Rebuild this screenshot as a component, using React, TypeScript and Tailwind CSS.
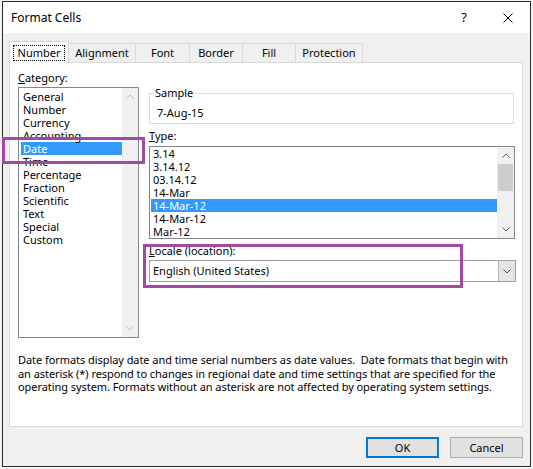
import React from 'react';

const categories = [
  'General',
  'Number',
  'Currency',
  'Accounting',
  'Date',
  'Time',
  'Percentage',
  'Fraction',
  'Scientific',
  'Text',
  'Special',
  'Custom',
];

const types = ['3.14', '3.14.12', '03.14.12', '14-Mar', '14-Mar-12', '14-Mar-12', 'Mar-12'];

const tabs = [
  { label: 'Alignment', width: 'w-[67px]' },
  { label: 'Font', width: 'w-[54px]' },
  { label: 'Border', width: 'w-[53px]' },
  { label: 'Fill', width: 'w-[53px]' },
  { label: 'Protection', width: 'w-[67px]' },
];

const Chevron = ({ dir, className = '' }: { dir: 'up' | 'down'; className?: string }) => (
  <svg width="8" height="5" viewBox="0 0 8 5" className={className}>
    <path
      d={dir === 'up' ? 'M0.5 4.5L4 1L7.5 4.5' : 'M0.5 0.5L4 4L7.5 0.5'}
      fill="none"
      stroke="currentColor"
      strokeWidth="1"
    />
  </svg>
);

export default function App() {
  return (
    <div className="relative w-[533px] h-[469px] bg-[#f3f3f3] pt-px pl-[2px] font-['Noto_Sans',sans-serif] text-[11px] text-black">
      <div className="flex flex-col w-[529px] h-[466px] border border-[#2b2b2b] bg-[#f0f0f0]">
        {/* Title bar */}
        <div className="flex items-center h-[31px] bg-white pl-[8px] pr-[17px]">
          <span className="flex-1 text-[12px]">Format Cells</span>
          <span className="mr-[36px] text-[13px]">?</span>
          <svg width="10" height="10" viewBox="0 0 10 10">
            <path d="M0.5 0.5L9.5 9.5M9.5 0.5L0.5 9.5" stroke="#000" strokeWidth="1" />
          </svg>
        </div>

        {/* Body */}
        <div className="flex-1 flex flex-col pt-[8px] pl-[6px] pr-[7px]">
          {/* Tabs */}
          <div className="flex items-end h-[21px]">
            <div className="relative z-10 -mb-px flex items-center justify-center w-[60px] h-[22px] border border-b-0 border-[#d9d9d9] bg-white">
              <span className="border border-dotted border-black px-[4px] leading-[14px]">Number</span>
            </div>
            {tabs.map((t) => (
              <div
                key={t.label}
                className={`flex items-center justify-center ${t.width} h-[19px] border-t border-r border-[#d9d9d9] bg-[#f0f0f0]`}
              >
                {t.label}
              </div>
            ))}
          </div>

          {/* Tab panel */}
          <div className="flex flex-col h-[365px] border border-[#d9d9d9] bg-white">
            <div className="flex pl-[8px] pt-[8px]">
              {/* Category */}
              <div className="flex flex-col w-[121px]">
                <div className="leading-[14px]">
                  <span className="underline">C</span>ategory:
                </div>
                <div className="flex mt-[2px] h-[251px] border border-[#828790]">
                  <div className="flex-1 pt-[2px] pl-[2px]">
                    {categories.map((c) => (
                      <div
                        key={c}
                        className={`h-[13px] leading-[13px] pl-[2px] ${c === 'Date' ? 'bg-[#3399ff] text-white' : ''}`}
                      >
                        {c}
                      </div>
                    ))}
                  </div>
                  <div className="flex flex-col justify-between w-[16px] bg-[#f0f0f0] text-[#c2c2c2]">
                    <div className="flex items-center justify-center h-[17px]">
                      <Chevron dir="up" />
                    </div>
                    <div className="flex items-center justify-center h-[17px]">
                      <Chevron dir="down" />
                    </div>
                  </div>
                </div>
              </div>

              {/* Right column */}
              <div className="flex flex-col ml-[10px] w-[366px]">
                <fieldset className="mt-[15px] w-[365px] border border-[#dcdcdc] pb-[3px]">
                  <legend className="ml-[4px] px-[1px] leading-[14px]">Sample</legend>
                  <div className="pt-[6px] pl-[7px] leading-[14px]">7-Aug-15</div>
                </fieldset>

                <div className="mt-[5px] leading-[14px]">
                  <span className="underline">T</span>ype:
                </div>
                <div className="flex mt-[3px] h-[93px] border border-[#828790] overflow-hidden">
                  <div className="flex-1 pl-px">
                    {types.map((t, i) => (
                      <div
                        key={i}
                        className={`h-[13px] leading-[13px] pl-[2px] ${i === 4 ? 'bg-[#3399ff] text-white' : ''}`}
                      >
                        {t}
                      </div>
                    ))}
                  </div>
                  <div className="flex flex-col w-[17px] bg-[#f0f0f0] text-[#606060]">
                    <div className="flex items-center justify-center h-[17px]">
                      <Chevron dir="up" />
                    </div>
                    <div className="mx-px h-[27px] bg-[#cdcdcd]" />
                    <div className="flex-1" />
                    <div className="flex items-center justify-center h-[17px]">
                      <Chevron dir="down" />
                    </div>
                  </div>
                </div>

                <div className="mt-[5px] leading-[14px]">
                  <span className="underline">L</span>ocale (location):
                </div>
                <div className="flex mt-[2px] h-[22px] w-[367px] border border-[#a0a0a0]">
                  <div className="flex-1 flex items-center pl-[3px]">English (United States)</div>
                  <div className="flex items-center justify-center w-[17px] border-l border-[#b4b4b4] bg-[#e5e5e5] text-[#505050]">
                    <Chevron dir="down" />
                  </div>
                </div>
              </div>
            </div>

            {/* Description */}
            <div className="mt-[15px] pl-[8px] leading-[13.5px] tracking-[-0.06px] whitespace-nowrap">
              <div>{'Date formats display date and time serial numbers as date values.\u00a0 Date formats that begin with'}</div>
              <div>an asterisk (*) respond to changes in regional date and time settings that are specified for the</div>
              <div>operating system. Formats without an asterisk are not affected by operating system settings.</div>
            </div>
          </div>

          {/* Buttons */}
          <div className="flex justify-end gap-[11px] mt-[10px]">
            <button className="w-[73px] h-[21px] border-2 border-[#0078d7] bg-[#e1e1e1] leading-none">OK</button>
            <button className="w-[73px] h-[21px] border border-[#adadad] bg-[#e1e1e1] leading-none">Cancel</button>
          </div>
        </div>
      </div>

      {/* Annotation boxes */}
      <div className="absolute left-[2px] top-[137px] w-[143px] h-[27px] border-[3px] border-[#a349a4]" />
      <div className="absolute left-[143px] top-[244px] w-[320px] h-[44px] border-[3px] border-[#a349a4]" />
    </div>
  );
}
